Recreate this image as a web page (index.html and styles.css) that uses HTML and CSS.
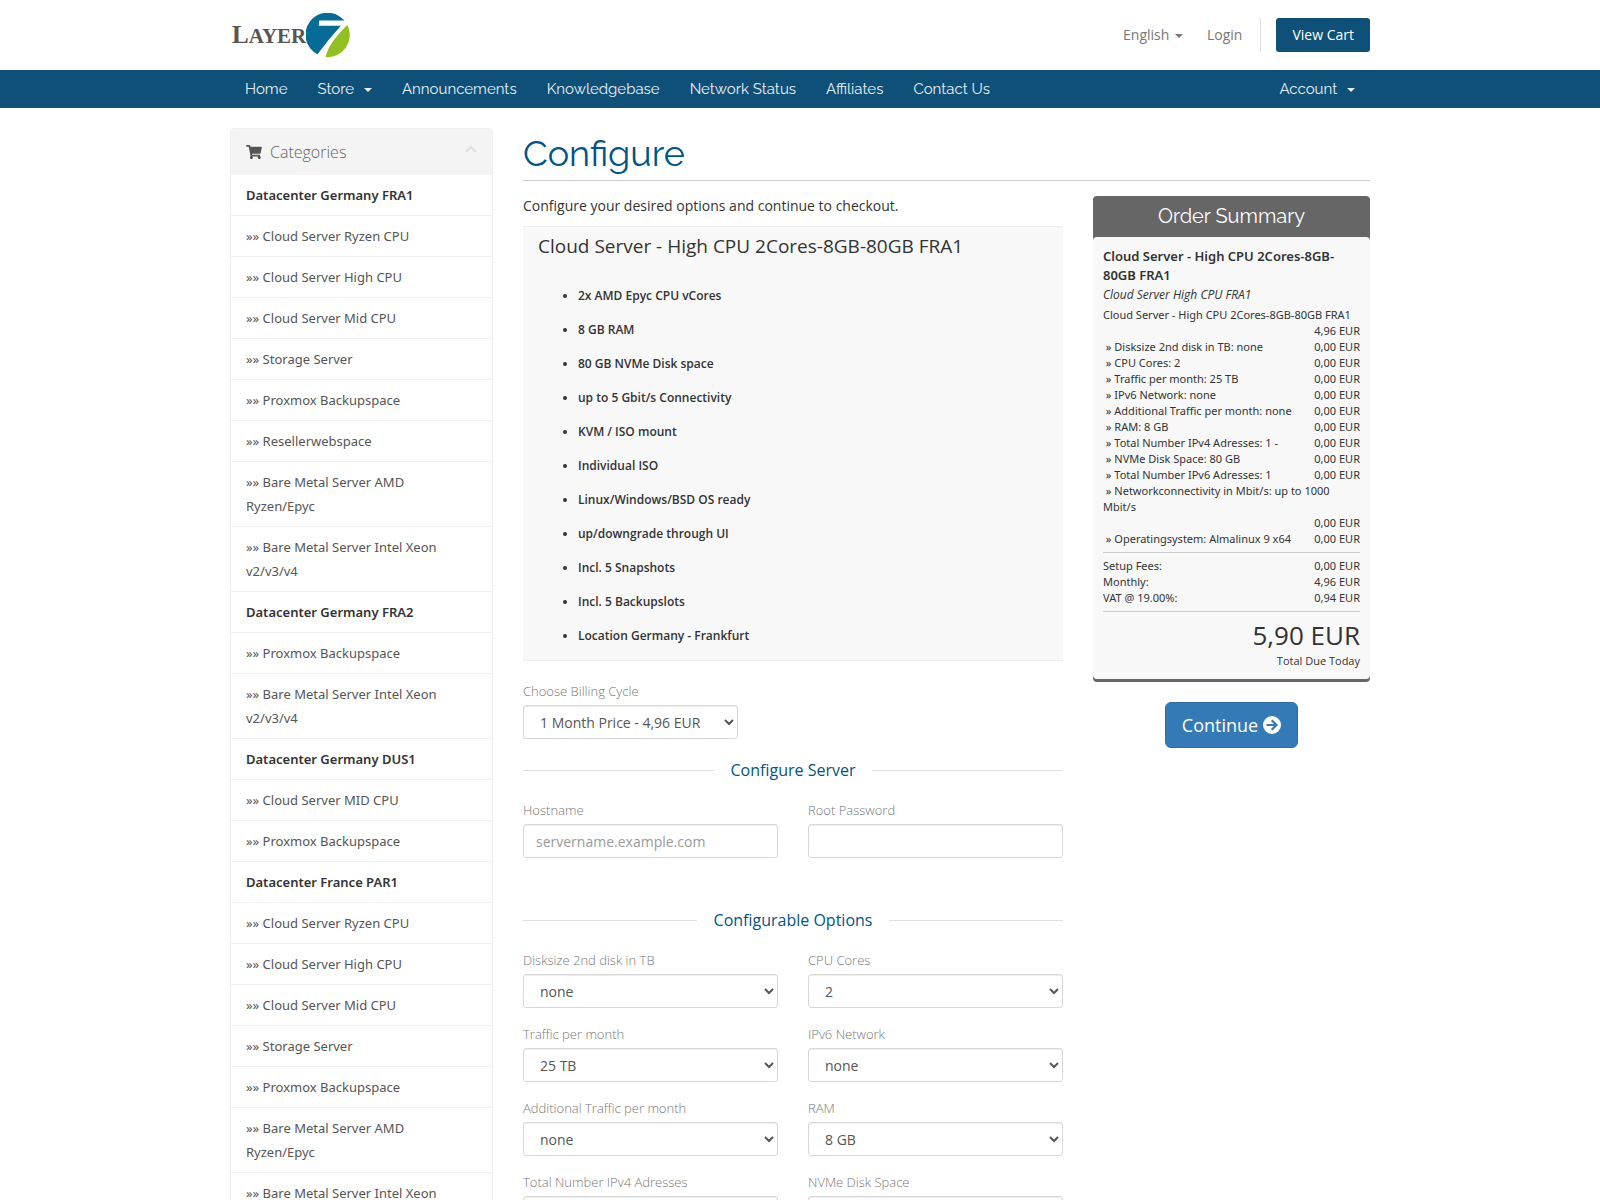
FILE: index.html
```html
<!DOCTYPE html>
<html lang="en">
<head>
<meta charset="utf-8">
<title>Configure - Layer7</title>
<meta name="viewport" content="width=device-width, initial-scale=1">
<link rel="stylesheet" href="styles.css">
</head>
<body>
<header class="container topbar">
  <a class="logo" href="#">
    <span class="logo-text">L<span class="logo-small">AYER</span></span>
    <svg class="logo-mark" viewBox="0 0 44 44" width="44" height="44" aria-hidden="true">
      <path fill="#066b96" d="M11.500 41.300A22 22 0 1 1 37.500 6.600L38 7.600H13.200L12.800 12.800H34.800Q22 27 11.500 41.300Z"/>
      <path fill="#93c01f" d="M41.300 12A22 22 0 0 1 19.500 44Q23 29.500 41.300 12Z"/>
    </svg>
  </a>
  <div class="top-links">
    <a class="top-link" href="#">English <span class="caret"></span></a>
    <a class="top-link" href="#">Login</a>
    <div class="cart-wrap"><a class="btn-cart" href="#">View Cart</a></div>
  </div>
</header>
<nav class="navbar">
  <div class="container navbar-inner">
    <a href="#">Home</a>
    <a href="#">Store <span class="caret"></span></a>
    <a href="#">Announcements</a>
    <a href="#">Knowledgebase</a>
    <a href="#">Network Status</a>
    <a href="#">Affiliates</a>
    <a href="#">Contact Us</a>
    <a class="account" href="#">Account <span class="caret"></span></a>
  </div>
</nav>
<main class="container layout">
  <aside class="panel">
    <h2 class="panel-heading">
      <svg class="cart-icon" viewBox="0 0 576 512" width="16" height="14" aria-hidden="true"><path fill="#555" d="M528.120 301.319l47.273-208C578.806 78.301 567.391 64 551.990 64H159.208l-9.166-44.810C147.758 8.021 137.930 0 126.529 0H24C10.745 0 0 10.745 0 24v16c0 13.255 10.745 24 24 24h69.883l70.248 343.435C147.325 417.100 136 435.222 136 456c0 30.928 25.072 56 56 56s56-25.072 56-56c0-15.674-6.447-29.835-16.824-40h209.647C430.447 426.165 424 440.326 424 456c0 30.928 25.072 56 56 56s56-25.072 56-56c0-22.172-12.888-41.332-31.579-50.405l5.517-24.276c3.413-15.018-8.002-29.319-23.403-29.319H218.117l-6.545-32h293.145c11.206 0 20.920-7.754 23.403-18.681z"/></svg>
      <span>Categories</span>
      <svg class="chevron" viewBox="0 0 12 8" width="12" height="8" aria-hidden="true"><path fill="none" stroke="#ddd" stroke-width="2" d="M1 7L6 2L11 7"/></svg>
    </h2>
    <div class="list">
      <a class="group" href="#">Datacenter Germany FRA1</a>
      <a href="#">»» Cloud Server Ryzen CPU</a>
      <a href="#">»» Cloud Server High CPU</a>
      <a href="#">»» Cloud Server Mid CPU</a>
      <a href="#">»» Storage Server</a>
      <a href="#">»» Proxmox Backupspace</a>
      <a href="#">»» Resellerwebspace</a>
      <a href="#">»» Bare Metal Server AMD Ryzen/Epyc</a>
      <a href="#">»» Bare Metal Server Intel Xeon v2/v3/v4</a>
      <a class="group" href="#">Datacenter Germany FRA2</a>
      <a href="#">»» Proxmox Backupspace</a>
      <a href="#">»» Bare Metal Server Intel Xeon v2/v3/v4</a>
      <a class="group" href="#">Datacenter Germany DUS1</a>
      <a href="#">»» Cloud Server MID CPU</a>
      <a href="#">»» Proxmox Backupspace</a>
      <a class="group" href="#">Datacenter France PAR1</a>
      <a href="#">»» Cloud Server Ryzen CPU</a>
      <a href="#">»» Cloud Server High CPU</a>
      <a href="#">»» Cloud Server Mid CPU</a>
      <a href="#">»» Storage Server</a>
      <a href="#">»» Proxmox Backupspace</a>
      <a href="#">»» Bare Metal Server AMD Ryzen/Epyc</a>
      <a href="#">»» Bare Metal Server Intel Xeon v2/v3/v4</a>
    </div>
  </aside>
  <section>
    <h1 class="page-title">Configure</h1>
    <form class="columns">
      <div class="config">
        <p class="intro">Configure your desired options and continue to checkout.</p>
        <div class="product">
          <h2 class="product-title">Cloud Server - High CPU 2Cores-8GB-80GB FRA1</h2>
          <ul class="features">
            <li>2x AMD Epyc CPU vCores</li>
            <li>8 GB RAM</li>
            <li>80 GB NVMe Disk space</li>
            <li>up to 5 Gbit/s Connectivity</li>
            <li>KVM / ISO mount</li>
            <li>Individual ISO</li>
            <li>Linux/Windows/BSD OS ready</li>
            <li>up/downgrade through UI</li>
            <li>Incl. 5 Snapshots</li>
            <li>Incl. 5 Backupslots</li>
            <li>Location Germany - Frankfurt</li>
          </ul>
        </div>
        <div class="field billing">
          <label for="cycle">Choose Billing Cycle</label>
          <select id="cycle" class="control"><option>1 Month Price - 4,96 EUR</option></select>
        </div>
        <h3 class="sub-heading"><span>Configure Server</span></h3>
        <div class="fields server">
          <div class="field"><label for="host">Hostname</label><input id="host" class="control" type="text" placeholder="servername.example.com"></div>
          <div class="field"><label for="pw">Root Password</label><input id="pw" class="control" type="password" autocomplete="off"></div>
        </div>
        <h3 class="sub-heading"><span>Configurable Options</span></h3>
        <div class="fields">
          <div class="field"><label for="o1">Disksize 2nd disk in TB</label><select id="o1" class="control"><option>none</option></select></div>
          <div class="field"><label for="o2">CPU Cores</label><select id="o2" class="control"><option>2</option></select></div>
          <div class="field"><label for="o3">Traffic per month</label><select id="o3" class="control"><option>25 TB</option></select></div>
          <div class="field"><label for="o4">IPv6 Network</label><select id="o4" class="control"><option>none</option></select></div>
          <div class="field"><label for="o5">Additional Traffic per month</label><select id="o5" class="control"><option>none</option></select></div>
          <div class="field"><label for="o6">RAM</label><select id="o6" class="control"><option>8 GB</option></select></div>
          <div class="field"><label for="o7">Total Number IPv4 Adresses</label><select id="o7" class="control"><option>1 -</option></select></div>
          <div class="field"><label for="o8">NVMe Disk Space</label><select id="o8" class="control"><option>80 GB</option></select></div>
        </div>
      </div>
      <div class="side">
        <div class="summary">
          <h2 class="summary-title">Order Summary</h2>
          <div class="summary-body">
            <strong class="summary-name">Cloud Server - High CPU 2Cores-8GB-80GB FRA1</strong>
            <em class="summary-group">Cloud Server High CPU FRA1</em>
            <div class="row"><span>Cloud Server - High CPU 2Cores-8GB-80GB FRA1</span><span class="price">4,96 EUR</span></div>
            <div class="row"><span>&nbsp;» Disksize 2nd disk in TB: none</span><span class="price">0,00 EUR</span></div>
            <div class="row"><span>&nbsp;» CPU Cores: 2</span><span class="price">0,00 EUR</span></div>
            <div class="row"><span>&nbsp;» Traffic per month: 25 TB</span><span class="price">0,00 EUR</span></div>
            <div class="row"><span>&nbsp;» IPv6 Network: none</span><span class="price">0,00 EUR</span></div>
            <div class="row"><span>&nbsp;» Additional Traffic per month: none</span><span class="price">0,00 EUR</span></div>
            <div class="row"><span>&nbsp;» RAM: 8 GB</span><span class="price">0,00 EUR</span></div>
            <div class="row"><span>&nbsp;» Total Number IPv4 Adresses: 1 -</span><span class="price">0,00 EUR</span></div>
            <div class="row"><span>&nbsp;» NVMe Disk Space: 80 GB</span><span class="price">0,00 EUR</span></div>
            <div class="row"><span>&nbsp;» Total Number IPv6 Adresses: 1</span><span class="price">0,00 EUR</span></div>
            <div class="row"><span>&nbsp;» Networkconnectivity in Mbit/s: up to 1000 Mbit/s</span><span class="price">0,00 EUR</span></div>
            <div class="row"><span>&nbsp;» Operatingsystem: Almalinux 9 x64</span><span class="price">0,00 EUR</span></div>
            <div class="totals">
              <div class="row"><span>Setup Fees:</span><span class="price">0,00 EUR</span></div>
              <div class="row"><span>Monthly:</span><span class="price">4,96 EUR</span></div>
              <div class="row"><span>VAT @ 19.00%:</span><span class="price">0,94 EUR</span></div>
            </div>
            <div class="due"><span class="amount">5,90 EUR</span><span>Total Due Today</span></div>
          </div>
        </div>
        <button class="btn-continue" type="button">Continue
          <svg viewBox="0 0 18 18" width="18" height="18" aria-hidden="true"><circle cx="9" cy="9" r="9" fill="#fff"/><path fill="none" stroke="#337ab7" stroke-width="2.200" d="M3.500 9H13M8.700 4.200L13.500 9L8.700 13.800"/></svg>
        </button>
      </div>
    </form>
  </section>
</main>
</body>
</html>
```

FILE: styles.css
```css
* { box-sizing: border-box; }
body {
  margin: 0;
  background: #fff;
  color: #333;
  font: 14px/20px "Open Sans", "Noto Sans", sans-serif;
}
a { color: inherit; text-decoration: none; }
h1, h2, h3, p, ul { margin: 0; font-weight: 400; }
.container { max-width: 1170px; margin: 0 auto; padding: 0 15px; }
.caret {
  display: inline-block;
  margin-left: 2px;
  vertical-align: middle;
  border: 4px solid transparent;
  border-top-color: currentColor;
  border-bottom: 0;
}

.topbar { display: flex; justify-content: space-between; align-items: center; height: 70px; }
.logo { display: flex; align-items: center; padding-left: 2px; }
.logo-text { color: #555; font: bold 25px/30px "Liberation Serif", serif; }
.logo-small { font-size: 21px; }
.top-links { display: flex; align-items: center; color: #777; }
.top-link { margin-right: 24px; }
.top-link:nth-child(2) { margin-right: 18px; }
.cart-wrap { border-left: 1px solid #ddd; padding-left: 15px; }
.btn-cart { display: block; padding: 7px 16px; border-radius: 3px; background: #0f5079; color: #fff; }

.navbar { background: #0f5079; color: #e8eff4; font: 15px/20px Raleway, Lato, sans-serif; }
.navbar-inner { display: flex; }
.navbar a { padding: 9px 15px; }
.navbar .caret { margin-left: 6px; }
.navbar .account { margin-left: auto; }

.layout { display: grid; grid-template-columns: 263px 1fr; gap: 30px; padding-top: 20px; }
.panel { border: 1px solid #eee; border-radius: 4px; align-self: start; }
.panel-heading {
  display: flex;
  align-items: center;
  gap: 8px;
  padding: 11px 15px;
  background: #f4f4f4;
  color: #666;
  font-size: 16px;
  font-weight: 300;
  line-height: 24px;
}
.chevron { margin-left: auto; margin-bottom: 6px; }
.list a {
  display: block;
  padding: 8px 24px 8px 15px;
  border-bottom: 1px solid #f1f1f1;
  color: #555;
  font: 13px/24px "Noto Sans", sans-serif;
}
.list .group { color: #333; font-weight: 600; }

.page-title {
  padding: 5px 0 6px;
  border-bottom: 1px solid #ccc;
  color: #058;
  font: 36px/41px Raleway, Lato, sans-serif;
}
.columns { display: grid; grid-template-columns: 1fr 277px; gap: 30px; padding-top: 15px; align-items: start; }
.intro { margin-bottom: 10px; }
.product { padding: 9px 15px 7px; margin-bottom: 20px; border: solid #eee; border-width: 1px 0; background: #f8f8f8; }
.product-title { font-size: 19px; line-height: 20px; margin-bottom: 23px; }
.features { padding-left: 40px; font-size: 12px; font-weight: 600; line-height: 34px; }

.field label { display: block; margin-bottom: 4px; color: #777; font-size: 13px; font-weight: 300; }
.control {
  display: block;
  width: 100%;
  height: 34px;
  padding: 6px 12px;
  border: 1px solid #d8d8d8;
  border-radius: 3px;
  background: #fff;
  box-shadow: inset 0 1px 1px rgba(0, 0, 0, .075);
  color: #555;
  font: inherit;
}
.control::placeholder { color: #999; }
.billing .control { width: 215px; }
.sub-heading {
  display: flex;
  align-items: center;
  gap: 17px;
  margin: 20px 0 19px;
  color: #058;
  font-size: 16px;
  line-height: 22px;
}
.sub-heading::before, .sub-heading::after { content: ""; flex: 1; border-top: 1px solid #ddd; }
.fields { display: grid; grid-template-columns: 1fr 1fr; gap: 16px 30px; }
.server { margin-bottom: 51px; }

.summary { background: #666; border-radius: 4px; padding-bottom: 3px; }
.summary-title { color: #fff; font: 20px/41px Raleway, Lato, sans-serif; text-align: center; }
.summary-body { padding: 10px; border-radius: 4px; background: #f8f8f8; font-size: 11px; line-height: 16px; }
.summary-name { display: block; font: 600 13px/19px "Noto Sans", sans-serif; }
.summary-group { display: block; font-size: 12px; line-height: 19px; margin-bottom: 3px; }
.row { display: flex; flex-wrap: wrap; justify-content: space-between; font-family: "Noto Sans", sans-serif; }
.price { margin-left: auto; }
.totals { margin: 5px 0; padding: 5px 0; border: solid #ccc; border-width: 1px 0; }
.due { display: flex; flex-direction: column; align-items: flex-end; }
.amount { font-size: 26px; line-height: 36px; }
.btn-continue {
  display: flex;
  align-items: center;
  gap: 5px;
  margin: 20px auto 0;
  padding: 10px 16px;
  border: 1px solid #2e6da4;
  border-radius: 6px;
  background: #337ab7;
  color: #fff;
  font: 18px/24px "Open Sans", "Noto Sans", sans-serif;
}
```
